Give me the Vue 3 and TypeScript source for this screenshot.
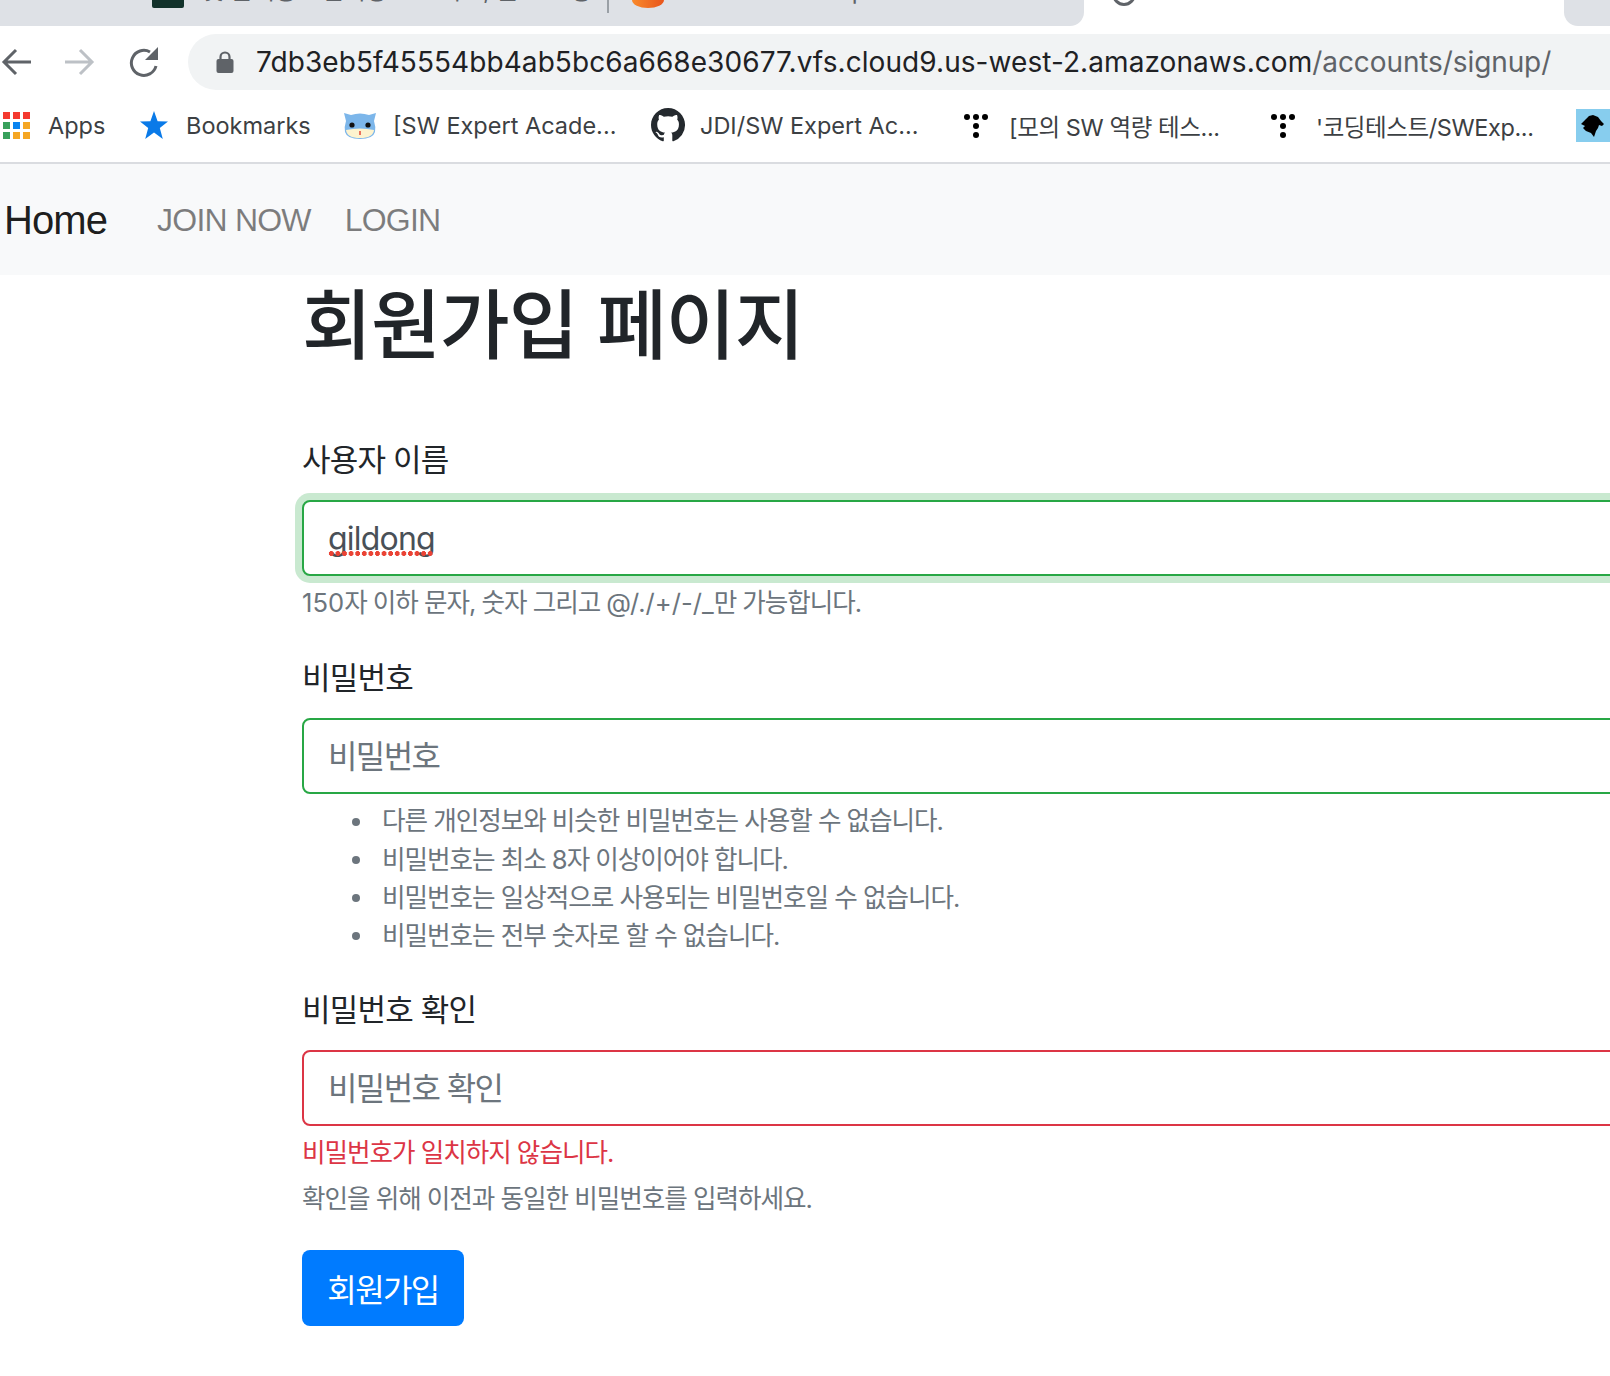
<script setup lang="ts">
type Bookmark = { label: string; width: number; icon: string; tight?: boolean };

const bookmarks: Bookmark[] = [
  { label: "Apps", width: 138, icon: "apps" },
  { label: "Bookmarks", width: 207, icon: "star" },
  { label: "[SW Expert Acade...", width: 307, icon: "mascot" },
  { label: "JDI/SW Expert Ac...", width: 309, icon: "github" },
  { label: "[모의 SW 역량 테스...", width: 307, icon: "dots", tight: true },
  { label: "'코딩테스트/SWExp...", width: 306, icon: "dots", tight: true },
];

const appColors = [
  "#f4392f", "#f4392f", "#f4392f",
  "#38a05c", "#0a84f0", "#f5a623",
  "#38a05c", "#f5a623", "#f5a623",
];

const passwordRules = [
  "다른 개인정보와 비슷한 비밀번호는 사용할 수 없습니다.",
  "비밀번호는 최소 8자 이상이어야 합니다.",
  "비밀번호는 일상적으로 사용되는 비밀번호일 수 없습니다.",
  "비밀번호는 전부 숫자로 할 수 없습니다.",
];
</script>

<template>
  <div class="page">
    <div class="tabstrip">
      <div class="tabs-left">
        <span class="tab-fav dark"></span>
        <span class="tab-title first">깃 분석용 - 일기장 프로젝트, 블로그 정리</span>
        <span class="tab-sep"></span>
        <span class="tab-fav orange"></span>
        <span class="tab-title second">Untitled workspace AWS Cloud9 console</span>
      </div>
      <div class="tab-active">
        <span class="tab-ring"></span>
        <span class="tab-title third">Document</span>
      </div>
      <div class="tab-next"><span class="tab-fav green"></span></div>
    </div>

    <div class="toolbar">
      <svg class="nav-btn" width="62" height="56" viewBox="0 0 62 56">
        <path d="M31 28H5M16 16 4 28l12 12" fill="none" stroke="#5f6368" stroke-width="3" />
      </svg>
      <svg class="nav-btn" width="63" height="56" viewBox="0 0 63 56">
        <path d="M3 28h26M18 16l12 12-12 12" fill="none" stroke="#bdc1c6" stroke-width="3" />
      </svg>
      <svg class="nav-btn" width="63" height="56" viewBox="0 0 63 56">
        <path d="M25 18a12.500 12.500 0 1 0 6 14" fill="none" stroke="#5f6368" stroke-width="3" />
        <path d="M33 13v13H20z" fill="#5f6368" />
      </svg>
      <div class="omnibox">
        <svg class="lock" width="20" height="24" viewBox="0 0 20 24">
          <path d="M5.500 10V7a4.500 4.500 0 0 1 9 0v3" fill="none" stroke="#5f6368" stroke-width="2.200" />
          <rect x="1.500" y="9" width="17" height="14" rx="2" fill="#5f6368" />
        </svg>
        <span class="url">7db3eb5f45554bb4ab5bc6a668e30677.vfs.cloud9.us-west-2.amazonaws.com<span class="url-path">/accounts/signup/</span></span>
      </div>
    </div>

    <div class="bookmarks">
      <div v-for="b in bookmarks" :key="b.label" class="bookmark" :style="{ width: b.width + 'px' }">
        <svg class="bm-icon" width="46" height="40" viewBox="0 0 46 40">
          <template v-if="b.icon === 'apps'">
            <rect
              v-for="(c, i) in appColors"
              :key="i"
              :x="1 + (i % 3) * 10"
              :y="7 + Math.floor(i / 3) * 10"
              width="7"
              height="7"
              :fill="c"
            />
          </template>
          <polygon
            v-else-if="b.icon === 'star'"
            points="14,6 17.600,16.200 28,16.400 19.800,23 22.800,34 14,27.500 5.200,34 8.200,23 0,16.400 10.400,16.200"
            fill="#0a7ae8"
          />
          <template v-else-if="b.icon === 'mascot'">
            <path d="M-3 8 4 10Q13 7 22 10L29 8 27 16Q29 22 28 27 26 34 13 34 0 34-2 27-3 22-1 16z" fill="#7cb6ea" />
            <path d="M-1 25Q13 22 27 25 26 33 13 33 0 33-1 25z" fill="#fdf3cf" />
            <circle cx="5" cy="20" r="2.600" fill="#111" />
            <circle cx="21" cy="20" r="2.600" fill="#111" />
            <rect x="12.300" y="26" width="1.400" height="4" fill="#e23b2e" />
          </template>
          <path
            v-else-if="b.icon === 'github'"
            transform="translate(-3 3) scale(2.130)"
            fill="#24292e"
            d="M8 0C3.580 0 0 3.580 0 8c0 3.540 2.290 6.530 5.470 7.590.4.070.55-.17.55-.38 0-.19-.01-.82-.01-1.490-2.010.37-2.530-.49-2.690-.94-.09-.23-.48-.94-.82-1.130-.28-.15-.68-.52-.01-.53.63-.01 1.080.58 1.230.82.72 1.210 1.870.87 2.330.66.07-.52.28-.87.51-1.070-1.780-.2-3.640-.89-3.640-3.950 0-.87.31-1.590.82-2.150-.08-.2-.36-1.020.08-2.120 0 0 .67-.21 2.200.82.64-.18 1.320-.27 2-.27s1.360.09 2 .27c1.530-1.040 2.200-.82 2.200-.82.44 1.100.16 1.920.08 2.120.51.56.82 1.270.82 2.150 0 3.070-1.870 3.750-3.650 3.950.29.25.54.73.54 1.480 0 1.070-.01 1.930-.01 2.200 0 .21.15.46.55.38A8.013 8.013 0 0 0 16 8c0-4.420-3.580-8-8-8z"
          />
          <g v-else fill="#000">
            <circle cx="4" cy="12" r="3" />
            <circle cx="13" cy="12" r="3" />
            <circle cx="22" cy="12" r="3" />
            <circle cx="13" cy="21" r="3" />
            <circle cx="13" cy="30" r="3" />
          </g>
        </svg>
        <span class="bm-label" :class="{ tight: b.tight }">{{ b.label }}</span>
      </div>
      <svg class="bm-last" width="34" height="33" viewBox="0 0 34 33">
        <rect width="34" height="33" fill="#87cdee" />
        <path d="M5 15 10 10 13 7 17 6 22 8 25 12 28 15 26 17 23 16 22 19 20 22 18 28 15 24 10 22 7 19 9 17z" fill="#000" />
      </svg>
    </div>

    <nav class="navbar">
      <a class="brand">Home</a>
      <a class="nav-link join">JOIN NOW</a>
      <a class="nav-link">LOGIN</a>
    </nav>

    <main class="content">
      <h1 class="title">회원가입 페이지</h1>

      <form class="signup" @submit.prevent>
        <div class="group">
          <label class="field-label">사용자 이름</label>
          <div class="field">
            <input class="input valid focused typed" type="text" value="gildong" spellcheck="false" />
            <span class="squiggle"></span>
          </div>
          <small class="hint"><span class="latin">150</span>자 이하 문자, 숫자 그리고 <span class="latin">@/./+/-/_</span>만 가능합니다.</small>
        </div>

        <div class="group">
          <label class="field-label">비밀번호</label>
          <input class="input valid" type="password" placeholder="비밀번호" />
          <ul class="rules">
            <li v-for="rule in passwordRules" :key="rule">{{ rule }}</li>
          </ul>
        </div>

        <div class="group">
          <label class="field-label">비밀번호 확인</label>
          <input class="input invalid" type="password" placeholder="비밀번호 확인" />
          <div class="error">비밀번호가 일치하지 않습니다.</div>
          <small class="hint">확인을 위해 이전과 동일한 비밀번호를 입력하세요.</small>
        </div>

        <button class="submit" type="submit">회원가입</button>
      </form>
    </main>
  </div>
</template>

<style scoped>
.page {
  width: 1610px;
  height: 1376px;
  overflow: hidden;
  background: #fff;
  color: #212529;
  font-family: Inter, "Noto Sans CJK KR", sans-serif;
}

.tabstrip {
  display: flex;
  height: 26px;
  overflow: hidden;
  background: #fff;
}
.tabs-left {
  flex: none;
  display: flex;
  width: 1084px;
  height: 26px;
  padding-left: 152px;
  box-sizing: border-box;
  overflow: hidden;
  background: #dee1e6;
  border-radius: 0 0 14px 0;
}
.tab-fav {
  flex: none;
  width: 32px;
  height: 8px;
}
.tab-fav.dark {
  background: #12322b;
  border-radius: 0 0 2px 2px;
}
.tab-fav.orange {
  background: linear-gradient(90deg, #f98a2b, #e8551c);
  border-radius: 0 0 16px 16px / 0 0 8px 8px;
  margin-left: 23px;
}
.tab-fav.green {
  width: 30px;
  height: 7px;
  background: #1fc850;
  margin-left: 16px;
}
.tab-title {
  flex: none;
  overflow: hidden;
  font-size: 24px;
  line-height: 30px;
  height: 30px;
  margin-top: -24px;
  color: #5f6368;
  white-space: nowrap;
}
.tab-title.first {
  width: 395px;
  margin-left: 18px;
}
.tab-title.second {
  width: 380px;
  margin-left: 24px;
}
.tab-sep {
  flex: none;
  width: 2px;
  height: 13px;
  background: #9aa0a6;
  margin-left: 10px;
}
.tab-active {
  flex: none;
  display: flex;
  width: 480px;
  height: 26px;
  padding-left: 28px;
  box-sizing: border-box;
  background: #fff;
}
.tab-ring {
  flex: none;
  width: 24px;
  height: 24px;
  margin-top: -18px;
  border: 3px solid #5f6368;
  border-radius: 50%;
  box-sizing: border-box;
}
.tab-title.third {
  margin-left: 20px;
}
.tab-next {
  flex: none;
  width: 46px;
  height: 26px;
  background: #dee1e6;
  border-radius: 0 0 0 14px;
}

.toolbar {
  display: flex;
  align-items: center;
  height: 64px;
  padding-top: 8px;
  box-sizing: border-box;
}
.nav-btn {
  flex: none;
}
.omnibox {
  flex: 1;
  display: flex;
  align-items: center;
  height: 56px;
  padding-left: 27px;
  background: #f1f3f4;
  border-radius: 28px 0 0 28px;
}
.lock {
  flex: none;
}
.url {
  margin-left: 21px;
  font-size: 28px;
  letter-spacing: 0.07px;
  color: #202124;
  white-space: nowrap;
}
.url-path {
  letter-spacing: -0.1px;
  color: #5f6368;
}

.bookmarks {
  display: flex;
  height: 74px;
  padding: 15px 0 0 2px;
  box-sizing: border-box;
  border-bottom: 2px solid #dadce0;
  overflow: hidden;
}
.bookmark {
  flex: none;
  display: flex;
  align-items: center;
  height: 40px;
  white-space: nowrap;
}
.bm-icon {
  flex: none;
  overflow: visible;
}
.bm-label {
  padding-top: 1px;
  font-size: 23.500px;
  color: #3c4043;
}
.bm-label.tight {
  letter-spacing: -0.4px;
}
.bm-last {
  flex: none;
  margin-top: 4px;
}

.navbar {
  display: flex;
  align-items: center;
  height: 111px;
  padding: 2px 0 0 4px;
  box-sizing: border-box;
  background: #f8f9fa;
  font-family: "Liberation Sans", Arial, sans-serif;
}
.brand {
  font-size: 40px;
  letter-spacing: -0.9px;
  color: rgba(0, 0, 0, 0.9);
}
.nav-link {
  font-size: 32px;
  letter-spacing: -0.8px;
  color: rgba(0, 0, 0, 0.5);
  margin-left: 34px;
}
.nav-link.join {
  margin-left: 50px;
}

.content {
  width: 1400px;
  margin-left: 302px;
  letter-spacing: -0.065em;
}
.title {
  margin: 0 0 63px;
  padding-top: 2px;
  font-size: 76px;
  font-weight: 500;
  line-height: 96px;
  letter-spacing: -1px;
}
.group {
  margin-bottom: 32px;
}
.field-label {
  display: block;
  margin-bottom: 16px;
  font-size: 31px;
  line-height: 48px;
  letter-spacing: -0.8px;
}
.field {
  position: relative;
}
.input {
  display: block;
  width: 100%;
  height: 76px;
  padding: 12px 24px;
  box-sizing: border-box;
  border: 2px solid #ced4da;
  border-radius: 8px;
  background: #fff;
  color: #495057;
  font-family: Inter, "Noto Sans CJK KR", sans-serif;
  font-size: 32px;
  line-height: 48px;
  letter-spacing: -0.05em;
  outline: none;
}
.input::placeholder {
  color: #6c757d;
}
.input.typed {
  letter-spacing: -0.025em;
}
.input.valid {
  border-color: #28a745;
}
.input.focused {
  box-shadow: 0 0 0 7px rgba(40, 167, 69, 0.25);
}
.input.invalid {
  border-color: #dc3545;
}
.squiggle {
  position: absolute;
  left: 26px;
  top: 51px;
  width: 106px;
  height: 5px;
  background: radial-gradient(circle, #ea4335 2.200px, transparent 2.600px) 0 0 / 6.600px 5px repeat-x;
}
.hint {
  display: block;
  margin-top: 8px;
  font-size: 25.600px;
  line-height: 38.400px;
  color: #6c757d;
}
.latin {
  letter-spacing: 0;
}
.rules {
  margin: 8px 0 -1.200px;
  padding: 0 0 0 50px;
  list-style: none;
  font-size: 25.600px;
  line-height: 38.200px;
  color: #6c757d;
}
.rules li {
  display: flex;
  align-items: center;
}
.rules li::before {
  content: "";
  flex: none;
  width: 8px;
  height: 8px;
  margin-right: 22px;
  border-radius: 50%;
  background: #6c757d;
}
.error {
  margin-top: 8px;
  font-size: 25.600px;
  line-height: 38.400px;
  color: #dc3545;
}
.submit {
  display: block;
  width: 162px;
  height: 76px;
  margin-top: -1px;
  padding: 0;
  border: 0;
  border-radius: 8px;
  background: #007bff;
  color: #fff;
  font-family: Inter, "Noto Sans CJK KR", sans-serif;
  font-size: 32px;
  letter-spacing: -0.05em;
}
</style>

<style>
html,
body {
  margin: 0;
  overflow: hidden;
}
</style>
